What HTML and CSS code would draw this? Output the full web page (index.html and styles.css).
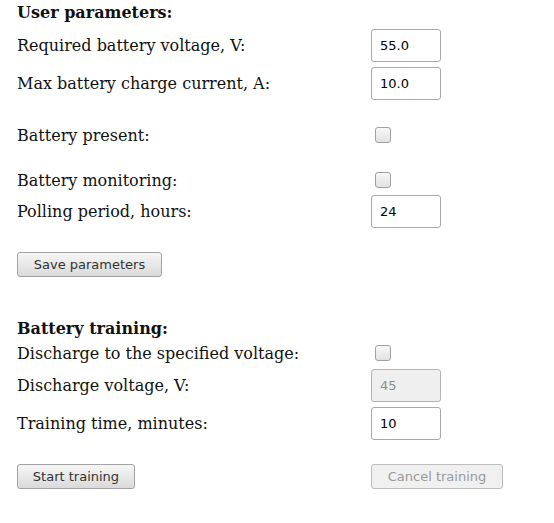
FILE: index.html
```html
<!DOCTYPE html>
<html lang="en">
<head>
    <meta charset="UTF-8">
    <title>Battery settings</title>
    <link rel="stylesheet" href="styles.css">
</head>
<body>
    <!-- User parameters -->
    <div class="section">
        <h3>User parameters:</h3>
        <div class="row first">
            <label for="voltage">Required battery voltage, V:</label>
            <input type="text" id="voltage" value="55.0">
        </div>
        <div class="row">
            <label for="current">Max battery charge current, A:</label>
            <input type="text" id="current" value="10.0">
        </div>
        <div class="row check spaced">
            <label for="present">Battery present:</label>
            <input type="checkbox" id="present">
        </div>
        <div class="row check spaced">
            <label for="monitoring">Battery monitoring:</label>
            <input type="checkbox" id="monitoring">
        </div>
        <div class="row">
            <label for="polling">Polling period, hours:</label>
            <input type="text" id="polling" value="24">
        </div>
        <div class="row buttons">
            <button class="save">Save parameters</button>
        </div>
    </div>

    <!-- Battery training -->
    <div class="section training">
        <h3>Battery training:</h3>
        <div class="row check tight">
            <label for="discharge">Discharge to the specified voltage:</label>
            <input type="checkbox" id="discharge">
        </div>
        <div class="row first">
            <label for="dvoltage">Discharge voltage, V:</label>
            <input type="text" id="dvoltage" value="45" disabled>
        </div>
        <div class="row">
            <label for="ttime">Training time, minutes:</label>
            <input type="text" id="ttime" value="10">
        </div>
        <div class="row buttons">
            <button class="start">Start training</button>
            <button class="cancel" disabled>Cancel training</button>
        </div>
    </div>
</body>
</html>
```

FILE: styles.css
```css
/* Global styles */
body {
    font-family: 'DejaVu Serif', serif;
    font-size: 16px;
    color: #111;
    background: #ffffff;
    margin: 0;
    padding: 0;
}

.section {
    padding: 3px 0 0 17px;
}

.section.training {
    padding-top: 42px;
}

h3 {
    margin: 0;
    font-size: 16px;
    line-height: 20px;
}

/* Rows: label column + control column */
.row {
    display: flex;
    align-items: center;
    height: 33px;
    margin-top: 5px;
}

.row.first {
    margin-top: 6px;
}

.row.check {
    height: 20px;
}

.row.spaced {
    margin-top: 25px;
}

.row.tight {
    margin-top: 4px;
}

.row label {
    width: 354px;
    flex-shrink: 0;
}

/* Inputs */
input[type="text"] {
    box-sizing: border-box;
    width: 70px;
    height: 33px;
    padding: 0 8px;
    font-family: 'DejaVu Sans', sans-serif;
    font-size: 13px;
    color: #000;
    background: #ffffff;
    border: 1px solid #a9a9a9;
    border-radius: 3px;
    outline: none;
}

input[type="text"]:disabled {
    background: #efefef;
    color: #8c8c8c;
    border-color: #b4b4b4;
}

input[type="checkbox"] {
    appearance: none;
    -webkit-appearance: none;
    box-sizing: border-box;
    width: 16px;
    height: 16px;
    margin: 0 0 0 4px;
    border: 1px solid #a0a0a0;
    border-radius: 3px;
    background: linear-gradient(to bottom, #f7f7f7, #e2e2e2);
}

/* Buttons */
.row.buttons {
    height: 25px;
    margin-top: 24px;
}

button {
    box-sizing: border-box;
    height: 25px;
    padding: 0;
    white-space: nowrap;
    font-family: 'DejaVu Sans', sans-serif;
    font-size: 13px;
    color: #333;
    border: 1px solid #a3a3a3;
    border-radius: 3px;
    background: linear-gradient(to bottom, #f6f6f6, #dadada);
    cursor: pointer;
}

button.save {
    width: 145px;
}

button.start {
    width: 118px;
}

button.cancel {
    width: 132px;
    margin-left: 236px;
}

button:disabled {
    color: #999;
    border-color: #bdbdbd;
    background: #f0f0f0;
    cursor: default;
}
```
